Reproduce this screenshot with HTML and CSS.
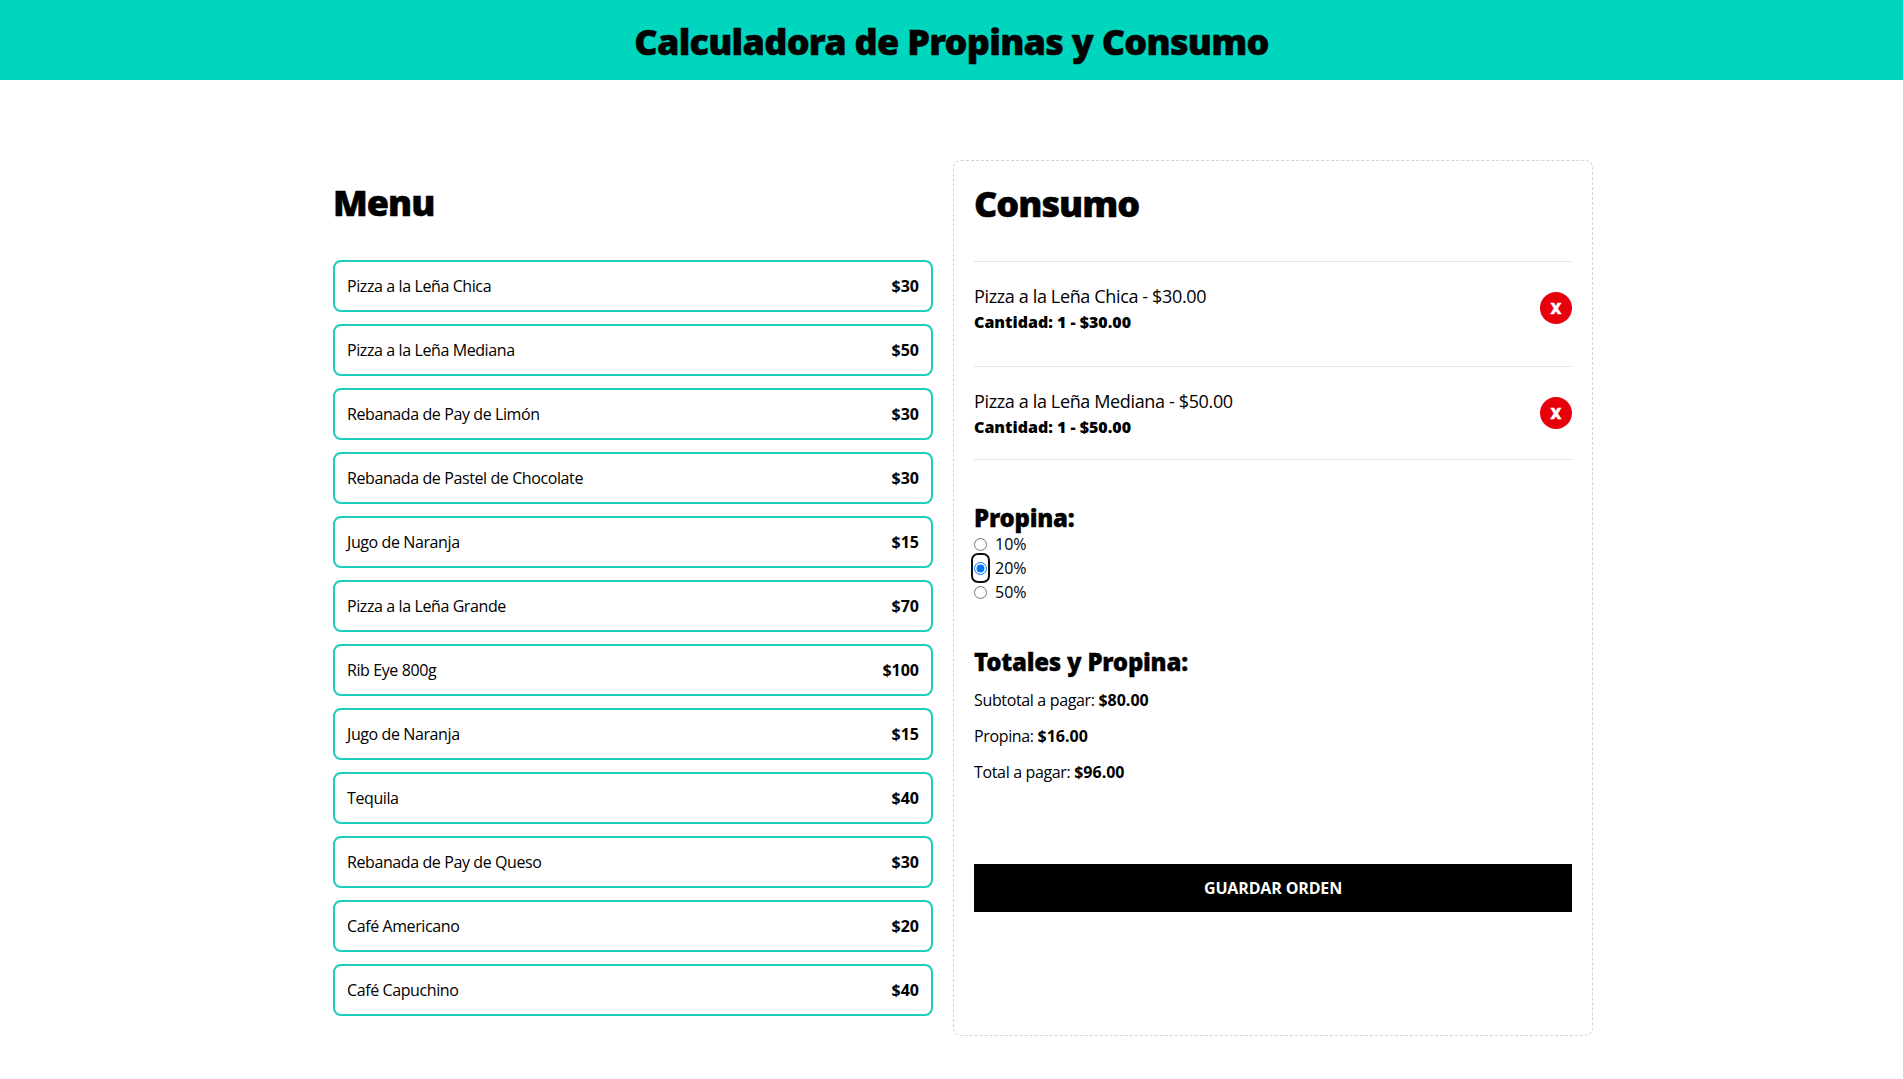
FILE: index.html
```html
<!DOCTYPE html>
<html lang="es">
<head>
<meta charset="UTF-8">
<meta name="viewport" content="width=device-width, initial-scale=1.0">
<title>Calculadora de Propinas y Consumo</title>
<link rel="stylesheet" href="styles.css">
</head>
<body>

<header class="site-header">
    <h1 class="site-title">Calculadora de Propinas y Consumo</h1>
</header>

<main class="layout">
    <section class="menu">
        <h2 class="section-title">Menu</h2>
        <div class="menu-list">
            <button class="menu-item"><span>Pizza a la Leña Chica</span><b>$30</b></button>
            <button class="menu-item"><span>Pizza a la Leña Mediana</span><b>$50</b></button>
            <button class="menu-item"><span>Rebanada de Pay de Limón</span><b>$30</b></button>
            <button class="menu-item"><span>Rebanada de Pastel de Chocolate</span><b>$30</b></button>
            <button class="menu-item"><span>Jugo de Naranja</span><b>$15</b></button>
            <button class="menu-item"><span>Pizza a la Leña Grande</span><b>$70</b></button>
            <button class="menu-item"><span>Rib Eye 800g</span><b>$100</b></button>
            <button class="menu-item"><span>Jugo de Naranja</span><b>$15</b></button>
            <button class="menu-item"><span>Tequila</span><b>$40</b></button>
            <button class="menu-item"><span>Rebanada de Pay de Queso</span><b>$30</b></button>
            <button class="menu-item"><span>Café Americano</span><b>$20</b></button>
            <button class="menu-item"><span>Café Capuchino</span><b>$40</b></button>
        </div>
    </section>

    <section class="order">
        <h2 class="section-title">Consumo</h2>

        <div class="order-list">
            <div class="order-item">
                <div>
                    <p class="order-name">Pizza a la Leña Chica - $30.00</p>
                    <p class="order-qty">Cantidad: 1 - $30.00</p>
                </div>
                <button class="remove-btn">X</button>
            </div>
            <div class="order-item">
                <div>
                    <p class="order-name">Pizza a la Leña Mediana - $50.00</p>
                    <p class="order-qty">Cantidad: 1 - $50.00</p>
                </div>
                <button class="remove-btn">X</button>
            </div>
        </div>

        <h3 class="sub-title tip-title">Propina:</h3>
        <form class="tip-form">
            <label class="tip-option"><span class="tip-radio"><input type="radio" name="tip" value="10"></span> 10%</label>
            <label class="tip-option"><span class="tip-radio tip-focus"><input type="radio" name="tip" value="20" checked></span> 20%</label>
            <label class="tip-option"><span class="tip-radio"><input type="radio" name="tip" value="50"></span> 50%</label>
        </form>

        <h3 class="sub-title totals-title">Totales y Propina:</h3>
        <div class="totals">
            <p>Subtotal a pagar: <b>$80.00</b></p>
            <p>Propina: <b>$16.00</b></p>
            <p>Total a pagar: <b>$96.00</b></p>
        </div>

        <button class="save-btn">Guardar Orden</button>
    </section>
</main>

</body>
</html>
```

FILE: styles.css
```css
* {
    box-sizing: border-box;
}

body {
    margin: 0;
    font-family: "Open Sans", "Noto Sans", sans-serif;
    font-size: 16px;
    line-height: 24px;
    color: #000;
    background: #fff;
}

h1, h2, h3, p {
    margin: 0;
}

button {
    font: inherit;
    background: none;
    border: none;
    padding: 0;
    color: inherit;
    cursor: pointer;
}

.site-header {
    background: #00d5be;
    padding: 22px 20px 18px;
}

.site-title {
    text-align: center;
    font-family: "Noto Sans", sans-serif;
    font-size: 36px;
    line-height: 40px;
    font-weight: 900;
    letter-spacing: -0.73px;
    -webkit-text-stroke: 0.5px #000;
}

.layout {
    width: 1280px;
    margin: 80px 0 0 313px;
    display: grid;
    grid-template-columns: 1fr 1fr;
}

.menu {
    padding: 20px;
}

.section-title {
    font-family: "Noto Sans", sans-serif;
    font-size: 36px;
    line-height: 40px;
    font-weight: 900;
    letter-spacing: -1px;
    -webkit-text-stroke: 0.5px #000;
    padding-top: 3px;
    margin-bottom: -3px;
}

.menu-list {
    margin-top: 40px;
    display: flex;
    flex-direction: column;
    gap: 12px;
}

.menu-item {
    display: flex;
    justify-content: space-between;
    padding: 12px;
    border: 2px solid #1ccfbc;
    border-radius: 8px;
    width: 100%;
    text-align: left;
    letter-spacing: -0.4px;
}

.menu-item b {
    letter-spacing: 0;
}

.order {
    padding: 20px;
    border: 1px dashed #d4d4d4;
    border-radius: 8px;
}

.order-list {
    margin-top: 40px;
}

.order-item {
    display: flex;
    justify-content: space-between;
    align-items: center;
    padding: 20px 0;
    border-top: 1px solid #e5e5e5;
}

.order-item + .order-item {
    margin-top: 12px;
}

.order-item:last-child {
    border-bottom: 1px solid #e5e5e5;
}

.order-name {
    font-size: 18px;
    line-height: 28px;
    letter-spacing: -0.36px;
}

.order-qty {
    font-weight: 800;
}

.remove-btn {
    width: 32px;
    height: 32px;
    border-radius: 50%;
    background: #e7000b;
    color: #fff;
    font-family: "Noto Sans", sans-serif;
    font-size: 15px;
    font-weight: 900;
    line-height: 32px;
    text-align: center;
    -webkit-text-stroke: 0.4px #fff;
}

.sub-title {
    font-family: "Noto Sans", sans-serif;
    font-size: 24px;
    line-height: 32px;
    font-weight: 900;
    letter-spacing: -0.25px;
    -webkit-text-stroke: 0.3px #000;
    padding-top: 1px;
    margin-bottom: -1px;
}

.tip-title {
    margin-top: 41px;
}

.tip-form {
    margin-top: -2px;
}

.tip-option {
    display: flex;
    gap: 8px;
}

.tip-radio {
    display: flex;
    align-items: center;
}

.tip-radio input {
    margin: 0;
    accent-color: #0075ff;
}

.tip-focus {
    outline: 2px solid #101010;
    outline-offset: 1px;
    border-radius: 4px;
}

.totals-title {
    margin-top: 41px;
}

.totals {
    margin-top: 11px;
    display: flex;
    flex-direction: column;
    gap: 12px;
    letter-spacing: -0.35px;
}

.totals b {
    letter-spacing: 0;
}

.save-btn {
    display: block;
    width: 100%;
    margin-top: 80px;
    padding: 12px;
    background: #000;
    color: #fff;
    font-weight: 700;
    letter-spacing: -0.15px;
    text-transform: uppercase;
    text-align: center;
}
```
